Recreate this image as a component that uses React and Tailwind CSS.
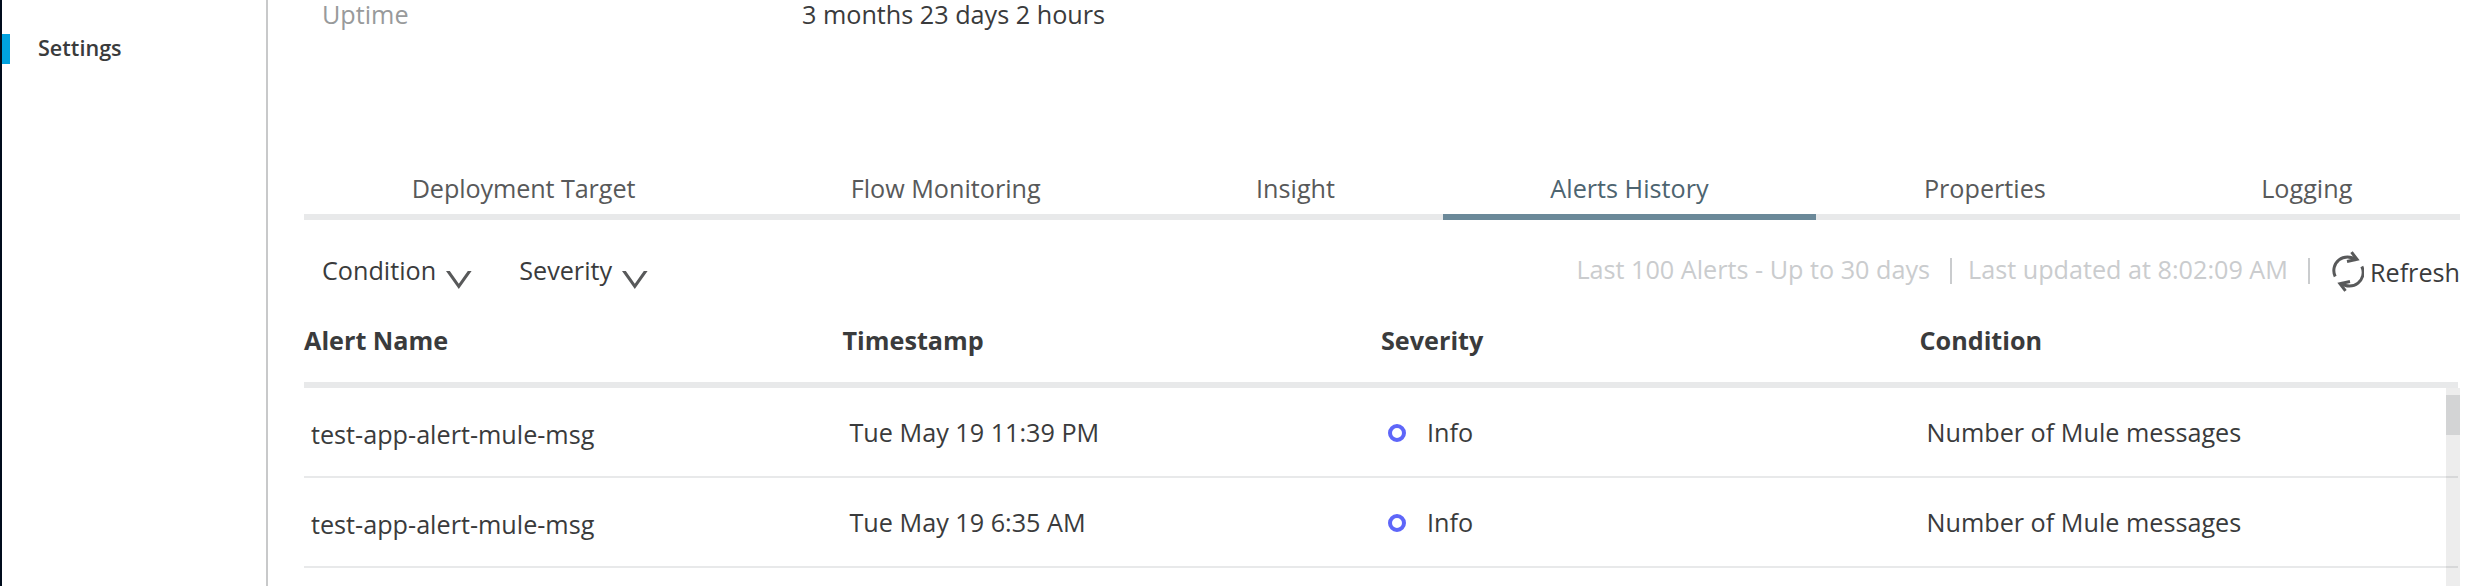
const tabs = ["Deployment Target", "Flow Monitoring", "Insight", "Alerts History", "Properties", "Logging"];
const columns = ["Alert Name", "Timestamp", "Severity", "Condition"];
const alerts = [
  { name: "test-app-alert-mule-msg", time: "Tue May 19 11:39 PM", severity: "Info", condition: "Number of Mule messages" },
  { name: "test-app-alert-mule-msg", time: "Tue May 19 6:35 AM", severity: "Info", condition: "Number of Mule messages" },
];

function Filter({ label }) {
  return (
    <button className="flex items-start">
      <span>{label}</span>
      <svg className="mt-[18px] ml-[9px] h-5 w-[28px]" viewBox="0 0 28 20" fill="#58595a">
        <path d="M1 1H4.800L13.800 13.800L22.800 1H26.600L13.800 19Z" />
      </svg>
    </button>
  );
}

function RefreshIcon() {
  return (
    <svg className="h-[42px] w-8" viewBox="0 0 32 42" fill="none" stroke="#58595a" strokeWidth="3">
      <path d="M3.200 25.500A13.600 13.600 0 0 1 24 9" />
      <path d="M19.500 1.200L25 8.300L15 10.500" />
      <path d="M29.800 15.500A13.600 13.600 0 0 1 9 32" />
      <path d="M13.500 39.800L8 32.700L18 30.500" />
    </svg>
  );
}

export default function App() {
  return (
    <div className="flex h-[586px] w-[2488px] overflow-hidden bg-white font-['Open_Sans',sans-serif] text-[25.2px] leading-9 text-[#3a3b3c]">
      <div className="w-0.5 bg-[#000c1c]" />
      <aside className="w-[266px] border-r-2 border-[#c8c9ca] pt-[34px]">
        <div className="h-[30px] border-l-8 border-[#00a2df] pl-7 text-[21.6px] leading-[28px] font-semibold">
          Settings
        </div>
      </aside>
      <main className="ml-9 flex w-[2156px] flex-col">
        <div className="flex h-[170px] pl-[18px] leading-[28px]">
          <span className="w-[480px] text-[#989a9b]">Uptime</span>
          <span>3 months 23 days 2 hours</span>
        </div>
        <nav className="flex h-[50px] text-center text-[#58595a]">
          {tabs.map((tab) => (
            <div
              key={tab}
              className={
                tab === "Alerts History"
                  ? "flex-auto border-b-6 border-[#6b8999] text-[#4d6470]"
                  : "flex-auto border-b-6 border-[#e8e9ea] first:tracking-[-0.1px]"
              }
            >
              {tab}
            </div>
          ))}
        </nav>
        <div className="flex h-[102px] justify-between pt-8 pl-[18px]">
          <div className="flex items-start gap-[46px]">
            <Filter label="Condition" />
            <Filter label="Severity" />
          </div>
          <div className="-mt-px flex items-start text-[#caccce]">
            <span>Last 100 Alerts - Up to 30 days</span>
            <span className="mt-[7px] ml-5 h-[26px] w-0.5 bg-[#caccce]" />
            <span className="ml-4">Last updated at 8:02:09 AM</span>
            <span className="mt-[7px] ml-5 h-[26px] w-0.5 bg-[#caccce]" />
            <button className="ml-[22px] flex items-start gap-1.5 text-[#3a3b3c]">
              <RefreshIcon />
              <span className="mt-[3px]">Refresh</span>
            </button>
          </div>
        </div>
        <div className="grid h-[66px] w-[2154px] grid-cols-4 border-b-6 border-[#e8e9ea] font-bold">
          {columns.map((c) => (
            <span key={c}>{c}</span>
          ))}
        </div>
        <div className="relative h-[198px]">
          {alerts.map((a) => (
            <div key={a.time} className="grid h-[90px] w-[2154px] grid-cols-4 items-center border-b-2 border-[#e8e9ea]">
              <span className="pt-1 pl-[7px]">{a.name}</span>
              <span className="pl-[7px]">{a.time}</span>
              <span className="flex items-center gap-[21px] pl-[7px]">
                <i className="mt-0.5 size-[18px] rounded-full border-4 border-[#5e66f9]" />
                {a.severity}
              </span>
              <span className="pl-[7px]">{a.condition}</span>
            </div>
          ))}
          <div className="absolute top-0 right-0 h-full w-3.5 bg-black/7 pt-[7px]">
            <div className="h-10 bg-[#d3d4d5]" />
          </div>
        </div>
      </main>
    </div>
  );
}
